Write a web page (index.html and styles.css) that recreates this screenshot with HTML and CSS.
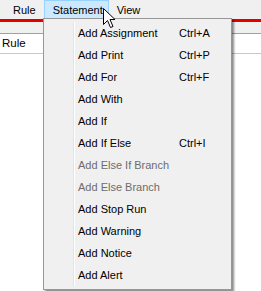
FILE: index.html
```html
<!DOCTYPE html>
<html lang="en">
<head>
  <meta charset="UTF-8">
  <title>Statement menu</title>
  <link rel="stylesheet" href="styles.css">
</head>
<body>
  <div class="menubar">
    <div class="menubar-item">Rule</div>
    <div class="menubar-item active">Statement</div>
    <div class="menubar-item">View</div>
  </div>
  <div class="redbar"></div>
  <div class="strip"></div>
  <div class="rows">
    <div class="row">Rule</div>
  </div>

  <!-- dropdown of Statement -->
  <div class="menu">
    <div class="item"><span class="label">Add Assignment</span><span class="key">Ctrl+A</span></div>
    <div class="item"><span class="label">Add Print</span><span class="key">Ctrl+P</span></div>
    <div class="item"><span class="label">Add For</span><span class="key">Ctrl+F</span></div>
    <div class="item"><span class="label">Add With</span></div>
    <div class="item"><span class="label">Add If</span></div>
    <div class="item"><span class="label">Add If Else</span><span class="key">Ctrl+I</span></div>
    <div class="item disabled"><span class="label">Add Else If Branch</span></div>
    <div class="item disabled"><span class="label">Add Else Branch</span></div>
    <div class="item"><span class="label">Add Stop Run</span></div>
    <div class="item"><span class="label">Add Warning</span></div>
    <div class="item"><span class="label">Add Notice</span></div>
    <div class="item"><span class="label">Add Alert</span></div>
  </div>

  <svg class="cursor" width="13" height="21" viewBox="0 0 13 21">
    <path d="M0.5 0.5 L0.5 16.5 L4.5 12.5 L7.5 19.5 L10 18.5 L7 11.5 L12 11.5 Z" fill="#fff" stroke="#000" stroke-width="1"/>
  </svg>
</body>
</html>
```

FILE: styles.css
```css
body{
  margin: 0;
  width: 261px;
  height: 291px;
  overflow: hidden;
  background: #ffffff;
  font-family: "Liberation Sans", Arial, sans-serif;
  font-size: 11px;
  color: #000;
  position: relative;
}

.menubar{
  display: flex;
  height: 19px;
  background: #f0f0f0;
  padding-left: 5px;
}

.menubar-item{
  padding: 0 7px;
  line-height: 18px;
  border: 1px solid transparent;
  border-bottom: none;
  white-space: nowrap;
}

.menubar-item.active{
  background: #cce8ff;
  border-color: #99d1ff;
  box-sizing: border-box;
  width: 65px;
  padding-left: 8px;
}

.redbar{
  height: 3px;
  background: #e00000;
}

.strip{
  height: 11px;
  background: #f0f0f0;
  border-bottom: 1px solid #a0a0a0;
}

.rows{
  background: #fff;
}

.row{
  height: 19px;
  line-height: 19px;
  padding-left: 2px;
  font-size: 11.5px;
  border-bottom: 1px solid #c8c8c8;
}

/* dropdown */
.menu{
  position: absolute;
  left: 43px;
  top: 18px;
  width: 187px;
  padding: 3px 0;
  background: #f0f0f0;
  border: 1px solid #979797;
  box-shadow: 2px 2px 2px rgba(0, 0, 0, 0.45);
}

.menu::before{
  content: "";
  position: absolute;
  left: 29px;
  top: 3px;
  bottom: 3px;
  width: 1px;
  background: #e2e3e3;
  border-right: 1px solid #ffffff;
}

.item{
  display: flex;
  height: 22px;
  line-height: 22px;
  padding-left: 34px;
  white-space: nowrap;
}

.label{
  width: 101px;
}

.item.disabled{
  color: #6d6d6d;
}

.cursor{
  position: absolute;
  left: 103px;
  top: 8px;
}
```
